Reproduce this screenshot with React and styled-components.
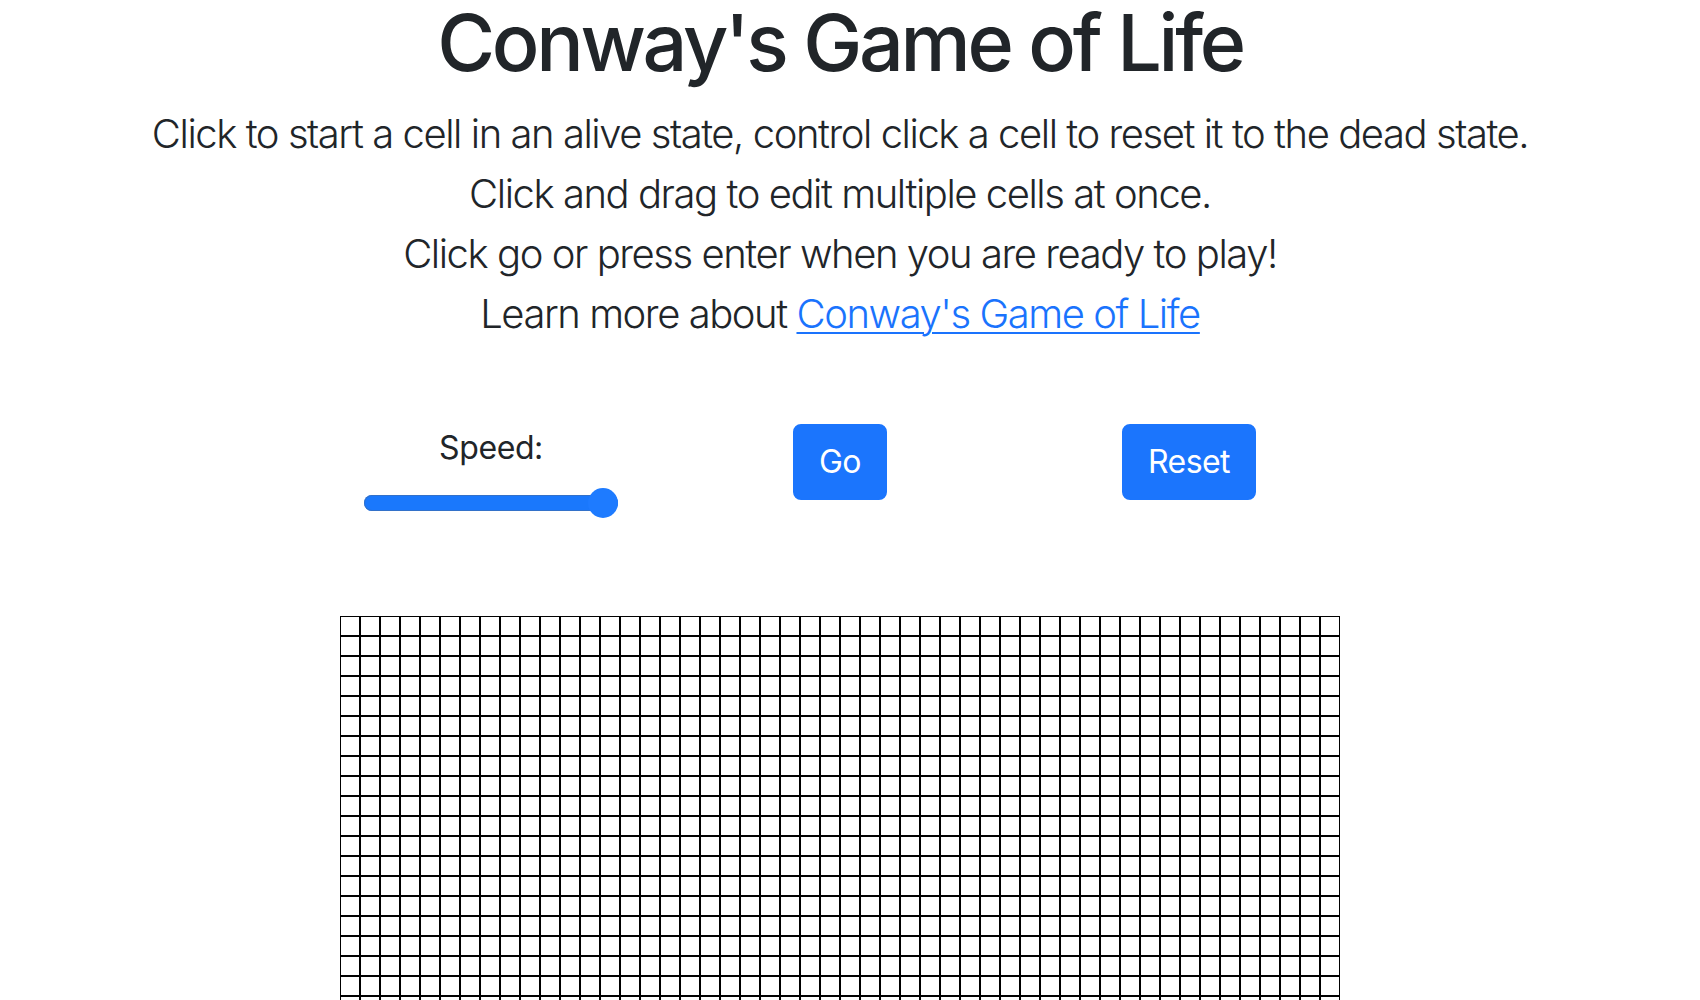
import React from "react";
import styled, { createGlobalStyle } from "styled-components";

const COLS = 50;
const ROWS = 30;

/* ================= GLOBAL ================= */

const GlobalStyle = createGlobalStyle`
  html, body {
    margin: 0;
    padding: 0;
    background: #ffffff;
    overflow: hidden;
  }

  body {
    font-family: Inter, "Noto Sans", "Liberation Sans", sans-serif;
    color: #212529;
  }
`;

/* ================= LAYOUT ================= */

const Page = styled.div`
  width: 1680px;
  display: flex;
  flex-direction: column;
  align-items: center;
  text-align: center;
`;

const Title = styled.h1`
  margin: 0;
  font-size: 79px;
  font-weight: 500;
  line-height: 84px;
  letter-spacing: -3.3px;
`;

const Intro = styled.p`
  margin: 20px 0 0;
  font-size: 40px;
  font-weight: 300;
  line-height: 60px;
  letter-spacing: -1.45px;
`;

const Link = styled.a`
  color: #1a73fd;
  text-decoration: underline;
  text-decoration-thickness: 2px;
  text-underline-offset: 4px;
`;

/* ================= CONTROLS ================= */

const Controls = styled.div`
  margin-top: 80px;
  display: grid;
  grid-template-columns: repeat(3, 349px);
  align-items: start;
  justify-items: center;
`;

const SpeedBox = styled.div`
  display: flex;
  flex-direction: column;
  align-items: center;
`;

const Label = styled.label`
  font-size: 32px;
  font-weight: 400;
  line-height: 48px;
  letter-spacing: -0.4px;
`;

const Range = styled.input`
  -webkit-appearance: none;
  appearance: none;
  width: 254px;
  height: 32px;
  margin: 15px 0 0;
  padding: 0;
  background: transparent;

  &::-webkit-slider-runnable-track {
    height: 16px;
    border-radius: 8px;
    background: #1a78fc;
    box-shadow: inset 0 0 0 1px #3371c9;
  }

  &::-webkit-slider-thumb {
    -webkit-appearance: none;
    appearance: none;
    width: 30px;
    height: 30px;
    margin-top: -7px;
    border: none;
    border-radius: 50%;
    background: #1e7bff;
  }
`;

const Button = styled.button`
  font-family: inherit;
  font-size: 32px;
  font-weight: 400;
  line-height: 48px;
  letter-spacing: -0.6px;
  padding: 12px 24px;
  color: #ffffff;
  background: #1b75fd;
  border: 2px solid #1b75fd;
  border-radius: 8px;
  cursor: pointer;
`;

/* ================= BOARD ================= */

const Board = styled.div`
  margin-top: 97px;
  display: grid;
  grid-template-columns: repeat(${({ $cols }) => $cols}, 20px);
  grid-auto-rows: 20px;
`;

const Cell = styled.div`
  box-sizing: border-box;
  border: 1px solid #000000;
  background: ${({ $alive }) => ($alive ? "#000000" : "#ffffff")};
`;

/* ================= COMPONENT ================= */

const App = () => {
  const cells = Array.from({ length: COLS * ROWS }, (_, i) => i);

  return (
    <>
      <GlobalStyle />
      <Page>
        <Title>Conway's Game of Life</Title>
        <Intro>
          Click to start a cell in an alive state, control click a cell to
          reset it to the dead state.
          <br />
          Click and drag to edit multiple cells at once.
          <br />
          Click go or press enter when you are ready to play!
          <br />
          Learn more about{" "}
          <Link href="#">Conway's Game of Life</Link>
        </Intro>

        <Controls>
          <SpeedBox>
            <Label htmlFor="speed">Speed:</Label>
            <Range
              id="speed"
              type="range"
              min="1"
              max="10"
              defaultValue="10"
            />
          </SpeedBox>
          <Button>Go</Button>
          <Button>Reset</Button>
        </Controls>

        <Board $cols={COLS}>
          {cells.map((i) => (
            <Cell key={i} />
          ))}
        </Board>
      </Page>
    </>
  );
};

export default App;
